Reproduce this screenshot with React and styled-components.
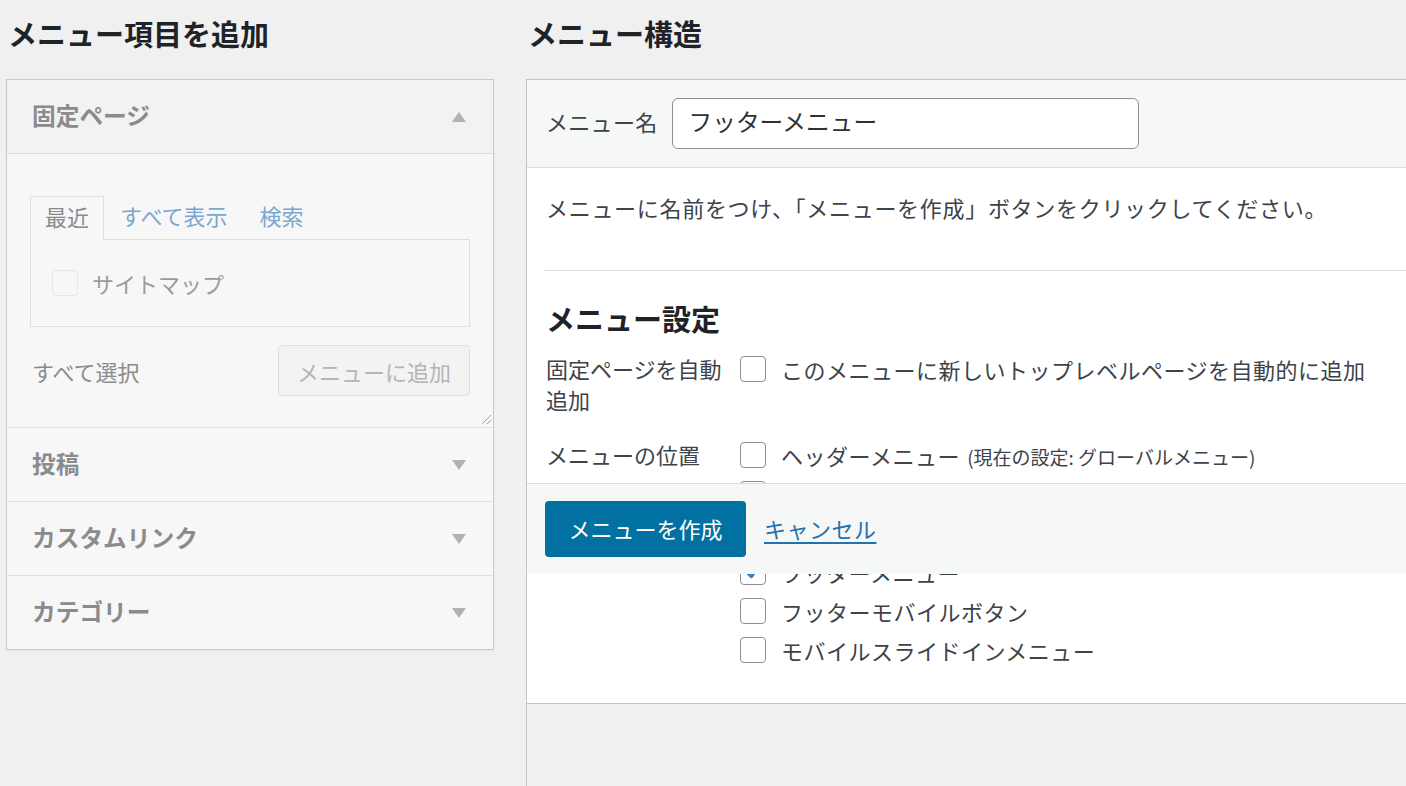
import React from 'react';
import styled, { createGlobalStyle } from 'styled-components';

const GlobalStyle = createGlobalStyle`
  html, body {
    margin: 0;
    padding: 0;
    background: #f0f0f1;
    overflow: hidden;
  }
  body {
    font-family: "Noto Sans CJK JP", "Noto Sans", sans-serif;
    color: #3c434a;
  }
`;

const Page = styled.div`
  display: flex;
  align-items: stretch;
  gap: 32px;
  padding-left: 6px;
  height: 786px;
`;

const LeftCol = styled.div`
  width: 488px;
  flex: none;
`;

const RightCol = styled.div`
  flex: 1;
  display: flex;
  flex-direction: column;
  margin-right: -20px;
`;

const Heading = styled.h2`
  margin: 14px 0 27px 2px;
  font-size: 29px;
  line-height: 38px;
  font-weight: 700;
  color: #1d2327;
`;

/* left: disabled accordion */
const Accordion = styled.div`
  border: 1px solid #c8c9cb;
  background: #f7f7f7;
  box-shadow: 0 1px 1px rgba(0, 0, 0, 0.04);
`;

const SectionTitle = styled.div`
  height: 69px;
  display: flex;
  align-items: center;
  justify-content: space-between;
  padding: 0 27px 4px 25px;
  background: ${(p) => (p.open ? '#f2f2f2' : '#f7f7f7')};
  border-bottom: ${(p) => (p.last ? 'none' : '1px solid #dedee0')};
  font-size: 23.7px;
  font-weight: 700;
  color: #8a8b8d;
`;

const Caret = styled.span`
  width: 0;
  height: 0;
  margin-top: 4px;
  border-left: 7px solid transparent;
  border-right: 7px solid transparent;
  ${(p) =>
    p.up ? 'border-bottom: 10px solid #b0b1b3;' : 'border-top: 10px solid #b0b1b3;'}
`;

const SectionBody = styled.div`
  position: relative;
  padding: 42px 23px 31px;
  border-bottom: 1px solid #dedee0;
  background: #f7f7f7;
`;

const Tabs = styled.div`
  display: flex;
  align-items: flex-end;
`;

const Tab = styled.span`
  height: 43px;
  box-sizing: border-box;
  display: flex;
  align-items: center;
  padding: 0 ${(p) => (p.active ? '14px' : '16px')} 5px;
  font-size: 22px;
  color: ${(p) => (p.active ? '#8a8b8d' : '#7aa7cf')};
  ${(p) =>
    p.active &&
    `
    height: 44px;
    border: 1px solid #dedee0;
    border-bottom: none;
    background: #f7f7f7;
    margin-bottom: -1px;
    position: relative;
    z-index: 1;
  `}
`;

const TabPanel = styled.div`
  height: 86px;
  border: 1px solid #dedee0;
  display: flex;
  align-items: center;
  padding-left: 21px;
  gap: 14px;
  font-size: 22px;
  color: #9a9b9d;
`;

const FaintBox = styled.span`
  width: 24px;
  height: 24px;
  border: 1px solid #e6e6e8;
  border-radius: 4px;
  background: #f7f7f7;
`;

const ActionRow = styled.div`
  margin-top: 18px;
  display: flex;
  align-items: center;
  justify-content: space-between;
  padding-left: 2px;
  font-size: 22px;
  color: #8a8b8d;
`;

const GhostButton = styled.span`
  height: 49px;
  display: flex;
  align-items: center;
  padding: 0 18px;
  border: 1px solid #e0e0e2;
  border-radius: 4px;
  background: #f3f3f4;
  font-size: 22px;
  color: #b4b5b7;
`;

const Grip = styled.svg`
  position: absolute;
  right: 1px;
  bottom: 2px;
`;

/* right: menu edit panel */
const Panel = styled.div`
  position: relative;
  border: 1px solid #c3c4c7;
  border-right: none;
  background: #fff;
`;

const PanelHeader = styled.div`
  height: 87px;
  display: flex;
  align-items: center;
  gap: 14px;
  padding-left: 19px;
  background: #f6f7f7;
  border-bottom: 1px solid #dcdcde;
  font-size: 22px;
  color: #3c434a;
`;

const FieldLabel = styled.span`
  padding-bottom: 5px;
  letter-spacing: 0.3px;
`;

const NameInput = styled.div`
  width: 433px;
  height: 49px;
  display: flex;
  align-items: center;
  padding: 0 16px;
  border: 1px solid #8c8f94;
  border-radius: 6px;
  background: #fff;
  font-size: 23.7px;
  color: #2c3338;
  span {
    padding-bottom: 5px;
  }
`;

const PanelBody = styled.div`
  padding: 23px 0 34px 17px;
`;

const Intro = styled.p`
  margin: 0 0 47px 2px;
  font-size: 22px;
  line-height: 32px;
  letter-spacing: 0.7px;
  color: #3c434a;
`;

const Settings = styled.div`
  border-top: 1px solid #dcdcde;
  padding-left: 2px;
`;

const SubHeading = styled.h3`
  margin: 28px 0 16px;
  font-size: 29px;
  line-height: 38px;
  font-weight: 700;
  color: #1d2327;
`;

const SettingRow = styled.div`
  display: flex;
  align-items: flex-start;
  margin-bottom: ${(p) => p.gap || 0}px;
`;

const RowLabel = styled.div`
  width: 194px;
  flex: none;
  font-size: 22px;
  line-height: 31px;
  color: #3c434a;
  padding-top: ${(p) => p.pad || 0}px;
`;

const OptionList = styled.div`
  display: flex;
  flex-direction: column;
`;

const Option = styled.label`
  height: ${(p) => p.h || 39}px;
  display: flex;
  align-items: center;
  gap: 15px;
  font-size: 22px;
  letter-spacing: 0.5px;
  color: #3c434a;
  white-space: nowrap;
`;

const Box = styled.span`
  width: 24px;
  height: 24px;
  flex: none;
  border: 1px solid #8c8f94;
  border-radius: 4px;
  background: #fff;
  display: flex;
  align-items: center;
  justify-content: center;
`;

const Note = styled.span`
  font-size: 19px;
  margin-left: 7px;
  letter-spacing: 0;
`;

const StickyFooter = styled.div`
  position: absolute;
  top: 403px;
  left: 0;
  right: 0;
  height: 90px;
  display: flex;
  align-items: center;
  gap: 18px;
  padding-left: 18px;
  background: #f6f7f7;
  border-top: 1px solid #dcdcde;
`;

const PrimaryButton = styled.span`
  width: 201px;
  height: 56px;
  box-sizing: border-box;
  display: flex;
  align-items: center;
  justify-content: center;
  padding-bottom: 3px;
  border-radius: 4px;
  background: #0071a1;
  color: #fff;
  font-size: 22px;
`;

const CancelLink = styled.a`
  font-size: 22px;
  padding-bottom: 3px;
  letter-spacing: 0.5px;
  color: #2271b1;
  text-decoration: underline;
  text-underline-offset: 4px;
`;

const Below = styled.div`
  flex: 1;
  border-left: 1px solid #c3c4c7;
`;

const Check = () => (
  <svg width="20" height="20" viewBox="0 0 20 20">
    <path d="M14.8 5.6 8.4 14.6 4.6 10.8" fill="none" stroke="#3582c4" strokeWidth="3.2" strokeLinecap="round" strokeLinejoin="round" />
  </svg>
);

const sections = [
  { title: '投稿' },
  { title: 'カスタムリンク' },
  { title: 'カテゴリー', last: true },
];

const locations = [
  { name: 'ヘッダーメニュー', note: '(現在の設定: グローバルメニュー)' },
  { name: 'ヘッダーサブメニュー' },
  { name: 'ドロワーメニュー' },
  { name: 'フッターメニュー', checked: true },
  { name: 'フッターモバイルボタン' },
  { name: 'モバイルスライドインメニュー' },
];

export default function App() {
  return (
    <>
      <GlobalStyle />
      <Page>
        <LeftCol>
          <Heading>メニュー項目を追加</Heading>
          <Accordion>
            <SectionTitle open>
              固定ページ
              <Caret up />
            </SectionTitle>
            <SectionBody>
              <Tabs>
                <Tab active>最近</Tab>
                <Tab>すべて表示</Tab>
                <Tab>検索</Tab>
              </Tabs>
              <TabPanel>
                <FaintBox />
                サイトマップ
              </TabPanel>
              <ActionRow>
                すべて選択
                <GhostButton>メニューに追加</GhostButton>
              </ActionRow>
              <Grip width="12" height="12" viewBox="0 0 12 12">
                <path d="M11 2 2 11M11 7 7 11" stroke="#a0a1a3" strokeWidth="1" />
              </Grip>
            </SectionBody>
            {sections.map((s) => (
              <SectionTitle key={s.title} last={s.last}>
                {s.title}
                <Caret />
              </SectionTitle>
            ))}
          </Accordion>
        </LeftCol>

        <RightCol>
          <Heading>メニュー構造</Heading>
          <Panel>
            <PanelHeader>
              <FieldLabel>メニュー名</FieldLabel>
              <NameInput>
                <span>フッターメニュー</span>
              </NameInput>
            </PanelHeader>
            <PanelBody>
              <Intro>メニューに名前をつけ、「メニューを作成」ボタンをクリックしてください。</Intro>
              <Settings>
                <SubHeading>メニュー設定</SubHeading>
                <SettingRow gap={20}>
                  <RowLabel>固定ページを自動追加</RowLabel>
                  <Option h={31}>
                    <Box />
                    このメニューに新しいトップレベルページを自動的に追加
                  </Option>
                </SettingRow>
                <SettingRow>
                  <RowLabel pad={4}>メニューの位置</RowLabel>
                  <OptionList>
                    {locations.map((l) => (
                      <Option key={l.name}>
                        <Box>{l.checked && <Check />}</Box>
                        <span>
                          {l.name}
                          {l.note && <Note>{l.note}</Note>}
                        </span>
                      </Option>
                    ))}
                  </OptionList>
                </SettingRow>
              </Settings>
            </PanelBody>
            <StickyFooter>
              <PrimaryButton>メニューを作成</PrimaryButton>
              <CancelLink href="#">キャンセル</CancelLink>
            </StickyFooter>
          </Panel>
          <Below />
        </RightCol>
      </Page>
    </>
  );
}
